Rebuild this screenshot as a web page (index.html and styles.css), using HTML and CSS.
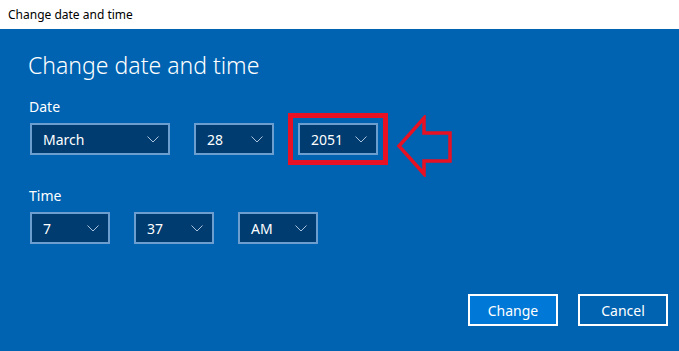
FILE: index.html
```html
<!DOCTYPE html>
<html lang="en">
<head>
<meta charset="utf-8">
<title>Change date and time</title>
<link rel="stylesheet" href="styles.css">
</head>
<body>
<div class="titlebar">Change date and time</div>
<main class="dialog">
  <h1 class="heading">Change date and time</h1>
  <section class="group group-date">
    <div class="label">Date</div>
    <div class="row">
      <div class="select select-month"><span>March</span><svg class="chev" viewBox="0 0 12 7"><path d="M0.5 0.5 L6 6 L11.5 0.5"/></svg></div>
      <div class="select"><span>28</span><svg class="chev" viewBox="0 0 12 7"><path d="M0.5 0.5 L6 6 L11.5 0.5"/></svg></div>
      <div class="select select-marked"><span>2051</span><svg class="chev" viewBox="0 0 12 7"><path d="M0.5 0.5 L6 6 L11.5 0.5"/></svg>
        <svg class="arrow" viewBox="0 0 56 62"><path d="M3 31 L28 3 L28 18 L54 18 L54 46 L28 46 L28 59 Z"/></svg>
      </div>
    </div>
  </section>
  <section class="group group-time">
    <div class="label">Time</div>
    <div class="row">
      <div class="select"><span>7</span><svg class="chev" viewBox="0 0 12 7"><path d="M0.5 0.5 L6 6 L11.5 0.5"/></svg></div>
      <div class="select"><span>37</span><svg class="chev" viewBox="0 0 12 7"><path d="M0.5 0.5 L6 6 L11.5 0.5"/></svg></div>
      <div class="select"><span>AM</span><svg class="chev" viewBox="0 0 12 7"><path d="M0.5 0.5 L6 6 L11.5 0.5"/></svg></div>
    </div>
  </section>
  <div class="actions">
    <button class="btn btn-primary">Change</button>
    <button class="btn">Cancel</button>
  </div>
</main>
</body>
</html>
```
FILE: styles.css
```css
* { box-sizing: border-box; }
html, body { margin: 0; padding: 0; }
body {
  width: 679px;
  height: 351px;
  overflow: hidden;
  font-family: "Noto Sans", "Open Sans", sans-serif;
  background: #0063b1;
}
.titlebar {
  height: 29px;
  background: #ffffff;
  color: #000000;
  font-size: 12px;
  line-height: 29px;
  padding-left: 8px;
  padding-top: 0;
}
.dialog {
  height: 322px;
  background: #0063b1;
  color: #ffffff;
  padding: 0 11px 0 28px;
  display: flex;
  flex-direction: column;
}
.heading {
  margin: 20px 0 0 0;
  font-weight: 300;
  font-size: 23px;
  line-height: 32px;
}
.group-date { margin-top: 17px; }
.group-time { margin-top: 32px; }
.label {
  font-size: 14px;
  line-height: 18px;
  padding-left: 1px;
}
.row {
  display: flex;
  gap: 24px;
  margin-top: 7px;
  padding-left: 2px;
}
.select {
  position: relative;
  width: 80px;
  height: 32px;
  border: 2px solid #6c9fd0;
  background: #003c70;
  color: #ffffff;
  font-size: 14px;
  display: flex;
  align-items: center;
  justify-content: space-between;
  padding: 0 9px 0 11px;
}
.select-month { width: 140px; }
.select-marked {
  outline: 5px solid #e81123;
  outline-offset: 5px;
}
.chev {
  width: 12px;
  height: 7px;
  fill: none;
  stroke: #a9c3dc;
  stroke-width: 1;
}
.arrow {
  position: absolute;
  left: 96px;
  top: -10px;
  width: 56px;
  height: 62px;
  fill: none;
  stroke: #e81123;
  stroke-width: 3.5;
}
.actions {
  margin-top: auto;
  margin-bottom: 25px;
  display: flex;
  justify-content: flex-end;
  gap: 20px;
}
.btn {
  width: 90px;
  height: 32px;
  border: 2px solid #ffffff;
  background: #0063b1;
  color: #ffffff;
  font-family: "Noto Sans", "Open Sans", sans-serif;
  font-size: 14px;
  padding: 0;
}
.btn-primary { background: #0078d7; }
```
